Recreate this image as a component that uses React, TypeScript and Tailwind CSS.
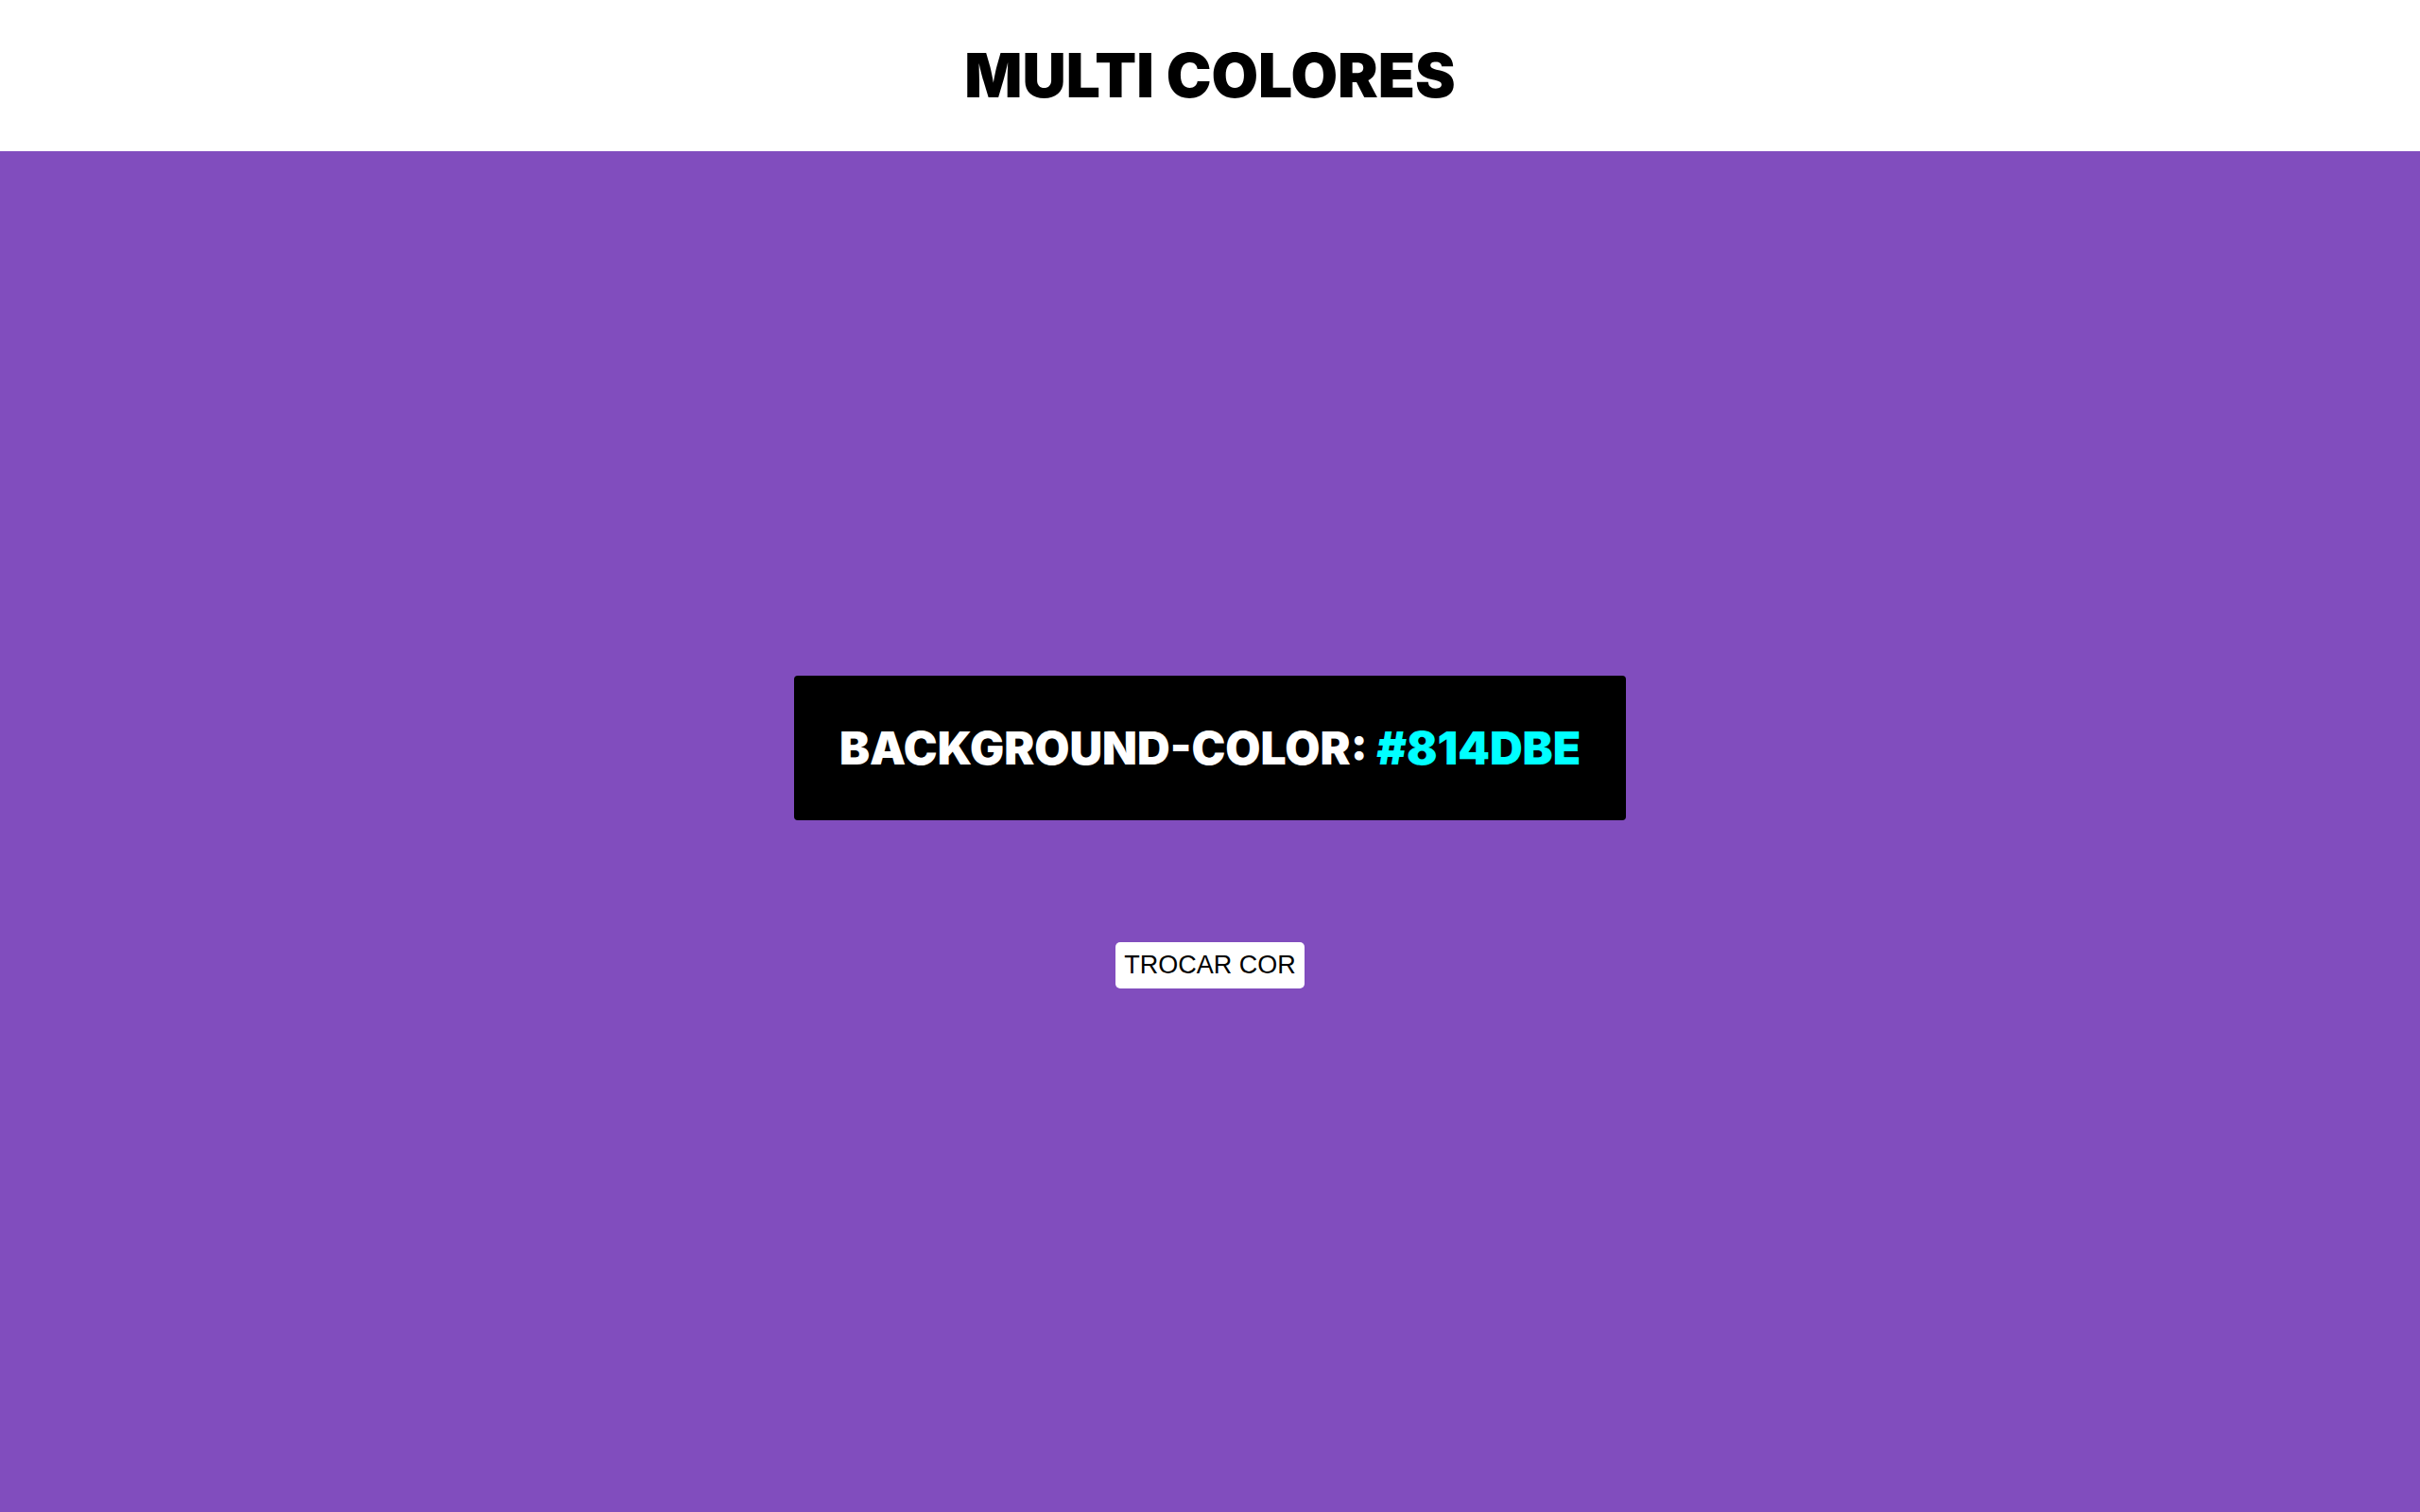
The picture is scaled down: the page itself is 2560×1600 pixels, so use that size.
export default function App() {
  return (
    <div className="flex min-h-screen flex-col bg-[#814dbe] font-['Inter',sans-serif]">
      <header className="flex h-[160px] items-center justify-center bg-white">
        <h1 className="text-[64px] font-black leading-none text-black">MULTI COLORES</h1>
      </header>
      <main className="flex flex-1 flex-col items-center justify-center gap-[129px]">
        <div className="rounded-[4px] bg-black px-12 py-12">
          <p className="text-[48px] font-black leading-[57px] text-white">
            BACKGROUND-COLOR: <span className="text-[#00ffff]">#814DBE</span>
          </p>
        </div>
        <button className="h-[49px] w-[200px] rounded-[5px] bg-white font-['Liberation_Sans',Arial,sans-serif] text-[27px] text-black">
          TROCAR COR
        </button>
      </main>
    </div>
  );
}
